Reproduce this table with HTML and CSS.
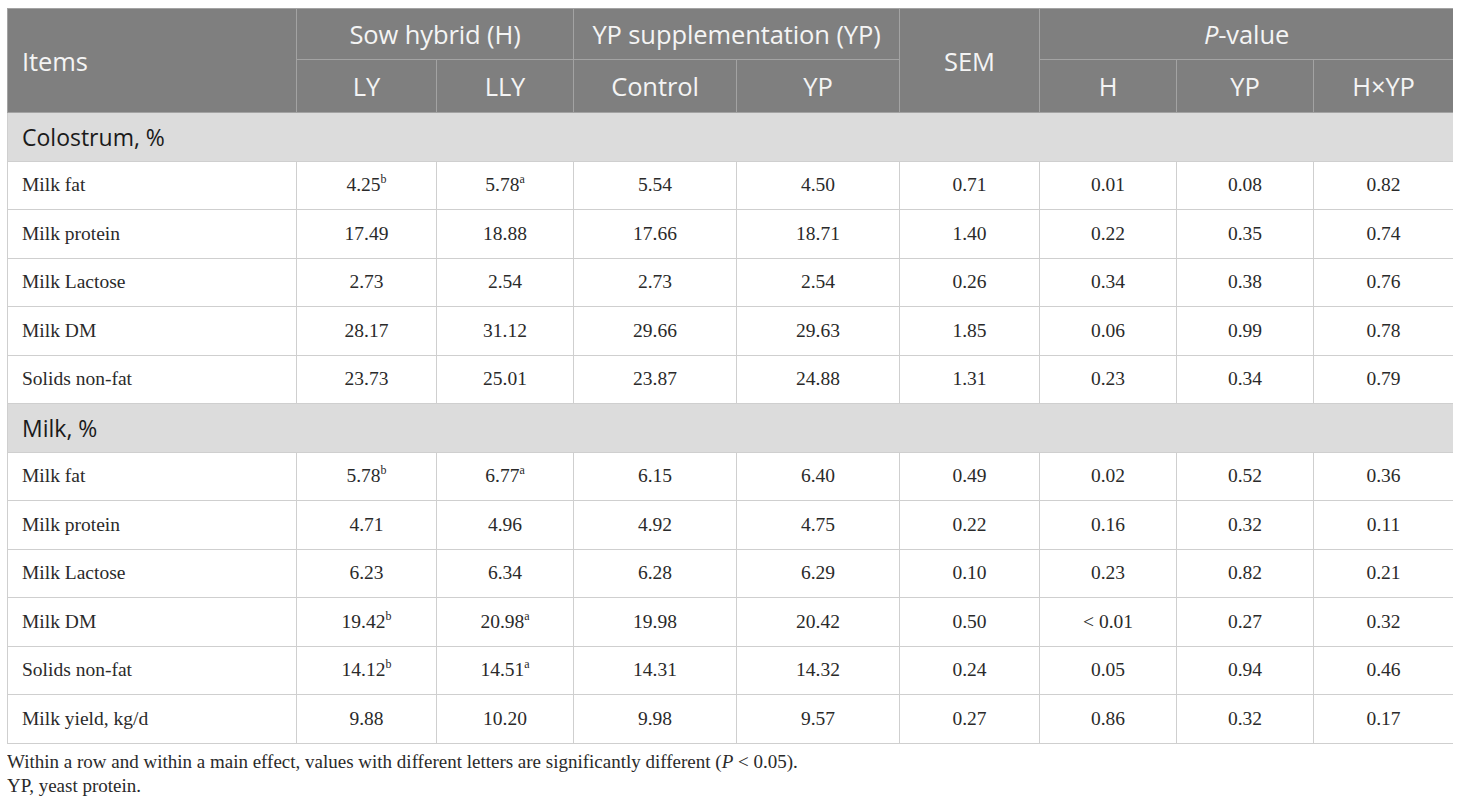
FILE: index.html
```html
<!DOCTYPE html>
<html lang="en">
<head>
    <meta charset="UTF-8">
    <meta name="viewport" content="width=device-width, initial-scale=1.0">
    <link rel="stylesheet" href="styles.css">
</head>
<body>

    <table class="data-table">
        <colgroup>
            <col class="col-items">
            <col class="col-ly">
            <col class="col-lly">
            <col class="col-ctrl">
            <col class="col-yp">
            <col class="col-sem">
            <col class="col-h">
            <col class="col-pyp">
            <col class="col-hxyp">
        </colgroup>
        <thead>
            <tr class="head-top">
                <th rowspan="2" class="items-head">Items</th>
                <th colspan="2">Sow hybrid (H)</th>
                <th colspan="2">YP supplementation (YP)</th>
                <th rowspan="2">SEM</th>
                <th colspan="3"><em>P</em>-value</th>
            </tr>
            <tr class="head-sub">
                <th>LY</th>
                <th>LLY</th>
                <th>Control</th>
                <th>YP</th>
                <th>H</th>
                <th>YP</th>
                <th>H×YP</th>
            </tr>
        </thead>
        <tbody>
            <tr class="section">
                <td colspan="9">Colostrum, %</td>
            </tr>
            <tr>
                <td>Milk fat</td>
                <td>4.25<sup>b</sup></td>
                <td>5.78<sup>a</sup></td>
                <td>5.54</td>
                <td>4.50</td>
                <td>0.71</td>
                <td>0.01</td>
                <td>0.08</td>
                <td>0.82</td>
            </tr>
            <tr>
                <td>Milk protein</td>
                <td>17.49</td>
                <td>18.88</td>
                <td>17.66</td>
                <td>18.71</td>
                <td>1.40</td>
                <td>0.22</td>
                <td>0.35</td>
                <td>0.74</td>
            </tr>
            <tr>
                <td>Milk Lactose</td>
                <td>2.73</td>
                <td>2.54</td>
                <td>2.73</td>
                <td>2.54</td>
                <td>0.26</td>
                <td>0.34</td>
                <td>0.38</td>
                <td>0.76</td>
            </tr>
            <tr>
                <td>Milk DM</td>
                <td>28.17</td>
                <td>31.12</td>
                <td>29.66</td>
                <td>29.63</td>
                <td>1.85</td>
                <td>0.06</td>
                <td>0.99</td>
                <td>0.78</td>
            </tr>
            <tr>
                <td>Solids non-fat</td>
                <td>23.73</td>
                <td>25.01</td>
                <td>23.87</td>
                <td>24.88</td>
                <td>1.31</td>
                <td>0.23</td>
                <td>0.34</td>
                <td>0.79</td>
            </tr>
            <tr class="section">
                <td colspan="9">Milk, %</td>
            </tr>
            <tr>
                <td>Milk fat</td>
                <td>5.78<sup>b</sup></td>
                <td>6.77<sup>a</sup></td>
                <td>6.15</td>
                <td>6.40</td>
                <td>0.49</td>
                <td>0.02</td>
                <td>0.52</td>
                <td>0.36</td>
            </tr>
            <tr>
                <td>Milk protein</td>
                <td>4.71</td>
                <td>4.96</td>
                <td>4.92</td>
                <td>4.75</td>
                <td>0.22</td>
                <td>0.16</td>
                <td>0.32</td>
                <td>0.11</td>
            </tr>
            <tr>
                <td>Milk Lactose</td>
                <td>6.23</td>
                <td>6.34</td>
                <td>6.28</td>
                <td>6.29</td>
                <td>0.10</td>
                <td>0.23</td>
                <td>0.82</td>
                <td>0.21</td>
            </tr>
            <tr>
                <td>Milk DM</td>
                <td>19.42<sup>b</sup></td>
                <td>20.98<sup>a</sup></td>
                <td>19.98</td>
                <td>20.42</td>
                <td>0.50</td>
                <td>&lt; 0.01</td>
                <td>0.27</td>
                <td>0.32</td>
            </tr>
            <tr>
                <td>Solids non-fat</td>
                <td>14.12<sup>b</sup></td>
                <td>14.51<sup>a</sup></td>
                <td>14.31</td>
                <td>14.32</td>
                <td>0.24</td>
                <td>0.05</td>
                <td>0.94</td>
                <td>0.46</td>
            </tr>
            <tr>
                <td>Milk yield, kg/d</td>
                <td>9.88</td>
                <td>10.20</td>
                <td>9.98</td>
                <td>9.57</td>
                <td>0.27</td>
                <td>0.86</td>
                <td>0.32</td>
                <td>0.17</td>
            </tr>
        </tbody>
    </table>

    <div class="notes">
        <p>Within a row and within a main effect, values with different letters are significantly different (<em>P</em> &lt; 0.05).</p>
        <p>YP, yeast protein.</p>
    </div>

</body>
</html>
```

FILE: styles.css
```css
body {
    margin: 8px 7px;
    background-color: #fff;
    font-family: "Liberation Serif", "Times New Roman", serif;
    color: #2a2a2a;
}

.data-table {
    border-collapse: collapse;
    table-layout: fixed;
    width: 1446px;
}

.col-items { width: 289px; }
.col-ly { width: 140px; }
.col-lly { width: 137px; }
.col-ctrl { width: 163px; }
.col-yp { width: 163px; }
.col-sem { width: 140px; }
.col-h { width: 137px; }
.col-pyp { width: 137px; }
.col-hxyp { width: 140px; }

.data-table th {
    background-color: #7f7f7f;
    color: #f4f4f4;
    font-family: "Open Sans", "Noto Sans", sans-serif;
    font-weight: normal;
    font-size: 25.5px;
    letter-spacing: -0.1px;
    border: 1px solid #a3a3a3;
    height: 50px;
    padding: 0 8px;
    text-align: center;
    vertical-align: middle;
}

.data-table .head-sub th {
    height: 52px;
}

.data-table th.items-head {
    text-align: left;
    padding-left: 14px;
}

.data-table td {
    border: 1px solid #cfcfcf;
    height: 47.5px;
    padding: 0 10px;
    font-size: 19.5px;
    text-align: center;
    vertical-align: middle;
}

.data-table td:first-child {
    text-align: left;
    padding-left: 14px;
}

.data-table tr.section td {
    background-color: #dcdcdc;
    font-family: "Open Sans", "Noto Sans", sans-serif;
    font-size: 23px;
    color: #1a1a1a;
}

.data-table sup {
    font-size: 12px;
    line-height: 0;
    vertical-align: 8px;
}

.notes {
    margin-top: 6px;
    font-size: 19px;
    color: #2a2a2a;
}

.notes p {
    margin: 0;
    line-height: 24px;
}
```
